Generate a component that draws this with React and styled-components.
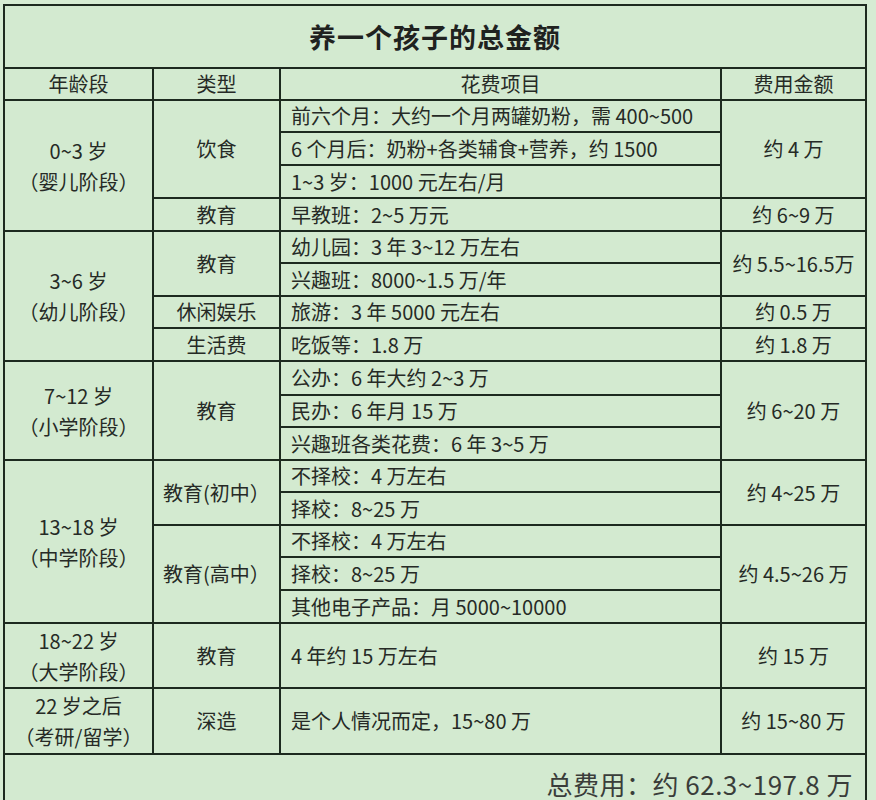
import styled, { createGlobalStyle } from "styled-components";

const GlobalStyle = createGlobalStyle`
  html, body {
    margin: 0;
    padding: 0;
    overflow: hidden;
    background: #d6ecd3;
  }
  body {
    font-family: "Noto Sans CJK SC", "Noto Sans", sans-serif;
    color: #262a26;
  }
`;

const Page = styled.div`
  padding: 4px 0 0 3px;
`;

const Table = styled.table`
  width: 862px;
  border-collapse: collapse;
  table-layout: fixed;
  background: #d3ead0;
  font-size: 20px;
`;

const Cell = styled.td`
  border: 2px solid #1d2a1f;
  padding: 0 ${(p) => (p.$left ? "10px" : "4px")};
  text-align: ${(p) => (p.$left ? "left" : "center")};
  vertical-align: middle;
  line-height: ${(p) => (p.$stack ? "31px" : "24px")};
  white-space: nowrap;
  overflow: hidden;
`;

const TitleCell = styled.td`
  border: 2px solid #1d2a1f;
  height: 61px;
  padding: 0;
  text-align: center;
  font-size: 27px;
  font-weight: 700;
  letter-spacing: 1px;
  color: #1f221f;
`;

// the reference is cut off right under this row's text
const TotalCell = styled.td`
  border: 2px solid #1d2a1f;
  border-bottom: none;
  height: 44px;
  text-align: right;
  vertical-align: bottom;
  padding: 0 12px 6px 0;
  font-size: 26px;
  line-height: 30px;
  color: #3a3d3a;
  letter-spacing: 0.5px;
`;

const Row = styled.tr`
  height: ${(p) => p.$h}px;
`;

const cols = [149, 127, 441, 145];

const ageCell = (top, bottom, span) => (
  <Cell rowSpan={span} $stack>
    {top}
    <br />
    {bottom}
  </Cell>
);

export default function App() {
  return (
    <>
      <GlobalStyle />
      <Page>
        <Table>
          <colgroup>
            {cols.map((w, i) => (
              <col key={i} style={{ width: w }} />
            ))}
          </colgroup>
          <tbody>
            <tr>
              <TitleCell colSpan={4}>养一个孩子的总金额</TitleCell>
            </tr>
            <Row $h={32}>
              <Cell>年龄段</Cell>
              <Cell>类型</Cell>
              <Cell>花费项目</Cell>
              <Cell>费用金额</Cell>
            </Row>

            <Row $h={32}>
              {ageCell("0~3 岁", "（婴儿阶段）", 4)}
              <Cell rowSpan={3}>饮食</Cell>
              <Cell $left>前六个月：大约一个月两罐奶粉，需 400~500</Cell>
              <Cell rowSpan={3}>约 4 万</Cell>
            </Row>
            <Row $h={33}>
              <Cell $left>6 个月后：奶粉+各类辅食+营养，约 1500</Cell>
            </Row>
            <Row $h={33}>
              <Cell $left>1~3 岁：1000 元左右/月</Cell>
            </Row>
            <Row $h={33}>
              <Cell>教育</Cell>
              <Cell $left>早教班：2~5 万元</Cell>
              <Cell>约 6~9 万</Cell>
            </Row>

            <Row $h={32}>
              {ageCell("3~6 岁", "（幼儿阶段）", 4)}
              <Cell rowSpan={2}>教育</Cell>
              <Cell $left>幼儿园：3 年 3~12 万左右</Cell>
              <Cell rowSpan={2}>约 5.5~16.5万</Cell>
            </Row>
            <Row $h={33}>
              <Cell $left>兴趣班：8000~1.5 万/年</Cell>
            </Row>
            <Row $h={32}>
              <Cell>休闲娱乐</Cell>
              <Cell $left>旅游：3 年 5000 元左右</Cell>
              <Cell>约 0.5 万</Cell>
            </Row>
            <Row $h={33}>
              <Cell>生活费</Cell>
              <Cell $left>吃饭等：1.8 万</Cell>
              <Cell>约 1.8 万</Cell>
            </Row>

            <Row $h={34}>
              {ageCell("7~12 岁", "（小学阶段）", 3)}
              <Cell rowSpan={3}>教育</Cell>
              <Cell $left>公办：6 年大约 2~3 万</Cell>
              <Cell rowSpan={3}>约 6~20 万</Cell>
            </Row>
            <Row $h={32}>
              <Cell $left>民办：6 年月 15 万</Cell>
            </Row>
            <Row $h={33}>
              <Cell $left>兴趣班各类花费：6 年 3~5 万</Cell>
            </Row>

            <Row $h={32}>
              {ageCell("13~18 岁", "（中学阶段）", 5)}
              <Cell rowSpan={2}>教育(初中）</Cell>
              <Cell $left>不择校：4 万左右</Cell>
              <Cell rowSpan={2}>约 4~25 万</Cell>
            </Row>
            <Row $h={33}>
              <Cell $left>择校：8~25 万</Cell>
            </Row>
            <Row $h={32}>
              <Cell rowSpan={3}>教育(高中）</Cell>
              <Cell $left>不择校：4 万左右</Cell>
              <Cell rowSpan={3}>约 4.5~26 万</Cell>
            </Row>
            <Row $h={33}>
              <Cell $left>择校：8~25 万</Cell>
            </Row>
            <Row $h={33}>
              <Cell $left>其他电子产品：月 5000~10000</Cell>
            </Row>

            <Row $h={65}>
              {ageCell("18~22 岁", "（大学阶段）", 1)}
              <Cell>教育</Cell>
              <Cell $left>4 年约 15 万左右</Cell>
              <Cell>约 15 万</Cell>
            </Row>
            <Row $h={66}>
              {ageCell("22 岁之后", "（考研/留学）", 1)}
              <Cell>深造</Cell>
              <Cell $left>是个人情况而定，15~80 万</Cell>
              <Cell>约 15~80 万</Cell>
            </Row>

            <tr>
              <TotalCell colSpan={4}>总费用：约 62.3~197.8 万</TotalCell>
            </tr>
          </tbody>
        </Table>
      </Page>
    </>
  );
}
